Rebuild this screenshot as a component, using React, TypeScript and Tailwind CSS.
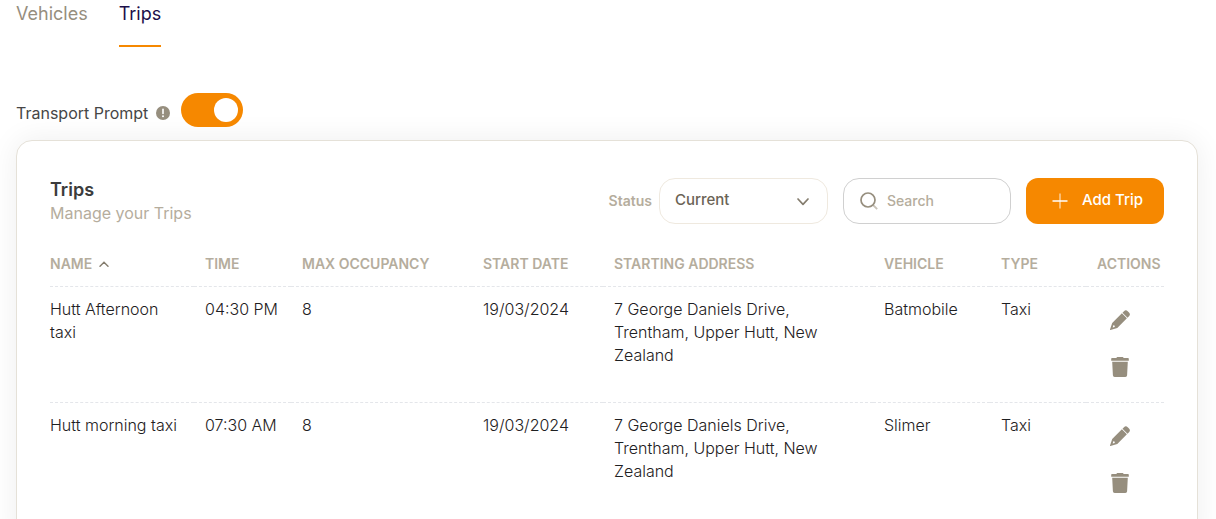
import { ReactNode, useState } from 'react'

// ── Data ──────────────────────────────────────────────────────────────────

interface Trip {
  id: number
  name: string
  time: string
  maxOccupancy: number
  startDate: string
  address: string
  vehicle: string
  type: string
}

const TRIPS: Trip[] = [
  { id: 1, name: 'Hutt Afternoon taxi', time: '04:30 PM', maxOccupancy: 8, startDate: '19/03/2024',
    address: '7 George Daniels Drive, Trentham, Upper Hutt, New Zealand', vehicle: 'Batmobile', type: 'Taxi' },
  { id: 2, name: 'Hutt morning taxi', time: '07:30 AM', maxOccupancy: 8, startDate: '19/03/2024',
    address: '7 George Daniels Drive, Trentham, Upper Hutt, New Zealand', vehicle: 'Slimer', type: 'Taxi' },
]

// The address column has no width and takes whatever is left.
const COLUMNS = [
  { label: 'Name', width: 'w-36' },
  { label: 'Time', width: 'w-[97px]' },
  { label: 'Max Occupancy', width: 'w-[181px]' },
  { label: 'Start Date', width: 'w-[131px]' },
  { label: 'Starting Address', width: '' },
  { label: 'Vehicle', width: 'w-[117px]' },
  { label: 'Type', width: 'w-24' },
  { label: 'Actions', width: 'w-[78px]' },
]

// ── Icons ─────────────────────────────────────────────────────────────────

function InfoIcon() {
  return (
    <svg viewBox="0 0 14 14" className="size-[14px]" aria-hidden="true">
      <circle cx="7" cy="7" r="7" fill="#968e7e" />
      <path d="M7 3.4v4" stroke="#fff" strokeWidth="1.6" strokeLinecap="round" />
      <circle cx="7" cy="10.2" r="1" fill="#fff" />
    </svg>
  )
}

function SearchIcon() {
  return (
    <svg viewBox="0 0 20 20" className="size-5" fill="none" aria-hidden="true">
      <path d="M14 14l4.2 4.2" stroke="#c9c3b8" strokeWidth="1.8" />
      <circle cx="9" cy="9" r="7" stroke="#968e7e" strokeWidth="1.7" />
    </svg>
  )
}

function PlusIcon() {
  return (
    <svg viewBox="0 0 16 16" className="size-4" fill="none" aria-hidden="true">
      <path d="M8 .5v15" stroke="#fff" strokeOpacity=".6" strokeWidth="1.5" />
      <path d="M.5 8h15" stroke="#fff" strokeWidth="1.5" />
    </svg>
  )
}

function PencilIcon() {
  return (
    <svg viewBox="0 0 20 20" className="size-5" fill="#968e7e" aria-hidden="true">
      <path d="M14 1.2a2.6 2.6 0 0 1 3.7 0l1.3 1.3a2.6 2.6 0 0 1 0 3.7l-1.5 1.5-5-5z" />
      <path fillRule="evenodd" d="M11.9 3.3l5 5-9.6 9.7L.4 20q-.5 0-.4-.5l2.2-6.6zM3.3 15.3l-.6 2.2 2.1-.6-.3-1.3z" />
    </svg>
  )
}

function TrashIcon() {
  return (
    <svg viewBox="0 0 18 20" className="h-5 w-[18px]" fill="#968e7e" aria-hidden="true">
      <path d="M6.2 0h5.6l1 1H17q.8 0 .8.8v1.9H.2V1.8Q.2 1 1 1h4.2z" />
      <path d="M1.2 4.8h15.6l-.7 13.4a1.8 1.8 0 0 1-1.8 1.8H3.7a1.8 1.8 0 0 1-1.8-1.8z" />
    </svg>
  )
}

// ── Pieces ────────────────────────────────────────────────────────────────

function Tab({ active = false, children }: { active?: boolean; children: ReactNode }) {
  return (
    <a href="#" aria-current={active ? 'page' : undefined}
      className={`border-b-2 pb-[17px] text-lg leading-7 ${active ? 'border-[#f68800] text-[#1c0f4a]' : 'border-transparent text-[#968e7e]'}`}>
      {children}
    </a>
  )
}

function TransportPrompt() {
  const [on, setOn] = useState(true)
  return (
    <div className="flex items-start px-4 pt-[46px]">
      <label htmlFor="transport-prompt" className="flex items-center gap-2 pt-2 text-base leading-6 text-[#464646]">
        Transport Prompt <InfoIcon />
      </label>
      <span className="relative ml-[11px] inline-flex">
        <input id="transport-prompt" type="checkbox" role="switch" checked={on} onChange={(e) => setOn(e.target.checked)}
          className="peer h-[34px] w-[62px] cursor-pointer appearance-none rounded-full bg-gray-300 checked:bg-[#f68800]" />
        <span className="pointer-events-none absolute top-[5px] left-[5px] size-6 rounded-full bg-white peer-checked:left-[33px]" />
      </span>
    </div>
  )
}

function Toolbar() {
  return (
    <div className="flex items-center">
      <label htmlFor="status" className="mr-[7px] text-sm font-semibold text-[#b5ad9d]">Status</label>
      <div className="relative mr-[15px]">
        <select id="status" defaultValue="Current"
          className="h-[46px] w-[169px] appearance-none rounded-2xl border border-[#efe9df] bg-white px-[15px] pb-0.5 text-[15px] font-medium text-[#6b6355]">
          <option>Current</option>
          <option>Archived</option>
        </select>
        <svg viewBox="0 0 12 8" className="pointer-events-none absolute top-5 right-[19px] h-2 w-3" fill="none" aria-hidden="true">
          <path d="M1 1l5 5.3L11 1" stroke="#847c6d" strokeWidth="1.7" strokeLinecap="round" strokeLinejoin="round" />
        </svg>
      </div>
      <div className="relative mr-[15px]">
        <span className="pointer-events-none absolute top-[13px] left-4"><SearchIcon /></span>
        <input type="text" placeholder="Search" aria-label="Search trips"
          className="h-[46px] w-[168px] rounded-2xl border border-[#d0d0d0] pr-3 pb-0.5 pl-[43px] text-sm font-medium text-[#6b6355] placeholder:text-[#b5ad9d]" />
      </div>
      <button type="button" className="flex h-[46px] items-center rounded-xl bg-[#f68800] pr-[21px] pl-[26px] text-[15px] font-medium text-white">
        <PlusIcon />
        <span className="pb-0.5 pl-3.5">Add Trip</span>
      </button>
    </div>
  )
}

function TripRow({ trip }: { trip: Trip }) {
  const cell = 'px-[11px] pt-[11px] align-top'
  return (
    <tr className="h-[116px] border-b border-dashed border-[#e4e6ea] last:border-b-0">
      <td className="pt-[11px] pr-[11px] align-top">{trip.name}</td>
      <td className={`${cell} whitespace-nowrap`}>{trip.time}</td>
      <td className={cell}>{trip.maxOccupancy}</td>
      <td className={cell}>{trip.startDate}</td>
      <td className={cell}>{trip.address}</td>
      <td className={cell}>{trip.vehicle}</td>
      <td className={cell}>{trip.type}</td>
      <td className="pt-[23px] pl-6 align-top">
        <div className="flex flex-col items-start gap-[27px]">
          <button type="button" aria-label={`Edit ${trip.name}`}><PencilIcon /></button>
          <button type="button" aria-label={`Delete ${trip.name}`} className="pl-px"><TrashIcon /></button>
        </div>
      </td>
    </tr>
  )
}

export default function App() {
  return (
    <div className="min-h-screen overflow-hidden bg-white font-['Inter',sans-serif]">
      <nav className="flex gap-[31px] px-4">
        <Tab>Vehicles</Tab>
        <Tab active>Trips</Tab>
      </nav>

      <TransportPrompt />

      <section className="mt-[13px] mr-[18px] ml-4 rounded-2xl border border-[#e5e1d8] bg-white px-[33px] pt-[37px] pb-8 shadow-[0_0_30px_rgba(0,0,0,0.07)]">
        <header className="flex items-start justify-between">
          <div>
            <h1 className="text-lg leading-6 font-semibold text-[#3c3c3c]">Trips</h1>
            <p className="text-base leading-[23px] text-[#b5ad9d]">Manage your Trips</p>
          </div>
          <Toolbar />
        </header>

        <table className="mt-[18px] w-full table-fixed border-collapse text-left text-base leading-[23px] font-light text-[#1e2022]">
          <colgroup>
            {COLUMNS.map((c) => <col key={c.label} className={c.width} />)}
          </colgroup>
          <thead>
            <tr className="h-[43px] border-b border-dashed border-[#e4e6ea] text-sm text-[#b5ad9d] uppercase">
              {COLUMNS.map((c, i) => (
                <th key={c.label} scope="col" className={`font-semibold whitespace-nowrap ${i === 0 ? '' : 'pl-[11px]'}`}>
                  <span className="flex items-center gap-[7px]">
                    {c.label}
                    {i === 0 && (
                      <svg viewBox="0 0 10 6" className="h-1.5 w-2.5" fill="none" aria-hidden="true">
                        <path d="M1 5.2l4-4 4 4" stroke="#847c6d" strokeWidth="1.4" strokeLinecap="round" />
                      </svg>
                    )}
                  </span>
                </th>
              ))}
            </tr>
          </thead>
          <tbody>
            {TRIPS.map((t) => <TripRow key={t.id} trip={t} />)}
          </tbody>
        </table>
      </section>
    </div>
  )
}
